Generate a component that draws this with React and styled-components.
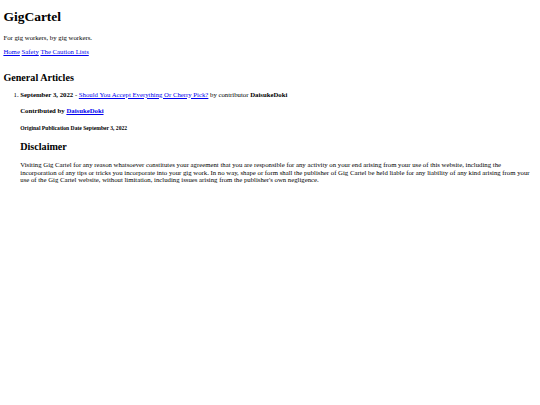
import React from "react";
import styled, { createGlobalStyle } from "styled-components";

const K = 0.421875;
const px = (v) => `${(v * K).toFixed(3)}px`;

const Global = createGlobalStyle`
  body {
    margin: 0 ${px(8)} ${px(8)};
    font-family: "Liberation Serif", "Times New Roman", serif;
    font-size: ${px(16)};
    line-height: 1.15;
    color: #000;
    background: #fff;
  }
  a { color: #0000ee; }
`;

const Title = styled.h1`
  font-size: ${px(32)};
  margin: ${px(21.44)} 0;
`;
const Tagline = styled.p`
  margin: ${px(16)} 0;
`;
const Nav = styled.p`
  margin: ${px(16)} 0 ${px(38)};
`;
const SectionTitle = styled.h2`
  font-size: ${px(24)};
  margin: ${px(19.92)} 0 ${px(17)};
`;
const List = styled.ol`
  margin: ${px(16)} 0;
  padding-left: ${px(40)};
`;
const Contributed = styled.h4`
  font-size: ${px(16)};
  margin: ${px(19.5)} 0;
`;
const PubDate = styled.h5`
  font-size: ${px(13.28)};
  margin: ${px(26)} 0 ${px(22.5)};
`;
const Para = styled.p`
  margin: ${px(19.5)} 0 ${px(16)};
  line-height: 1.12;
`;

export default function App() {
  return (
    <>
      <Global />
      <Title>GigCartel</Title>
      <Tagline>For gig workers, by gig workers.</Tagline>
      <Nav>
        <a href="#">Home</a> <a href="#">Safety</a> <a href="#">The Caution Lists</a>
      </Nav>
      <SectionTitle>General Articles</SectionTitle>
      <List>
        <li>
          <b>September 3, 2022</b> - <a href="#">Should You Accept Everything Or Cherry Pick?</a> by contributor <b>DaisukeDoki</b>
          <Contributed>
            Contributed by <a href="#">DaisukeDoki</a>
          </Contributed>
          <PubDate>Original Publication Date September 3, 2022</PubDate>
          <SectionTitle>Disclaimer</SectionTitle>
          <Para>
            Visiting Gig Cartel for any reason whatsoever constitutes your agreement that you are responsible for any activity on your end arising from your use of this website, including the incorporation of any tips or tricks you incorporate into your gig work. In no way, shape or form shall the publisher of Gig Cartel be held liable for any liability of any kind arising from your use of the Gig Cartel website, without limitation, including issues arising from the publisher's own negligence.
          </Para>
        </li>
      </List>
    </>
  );
}
